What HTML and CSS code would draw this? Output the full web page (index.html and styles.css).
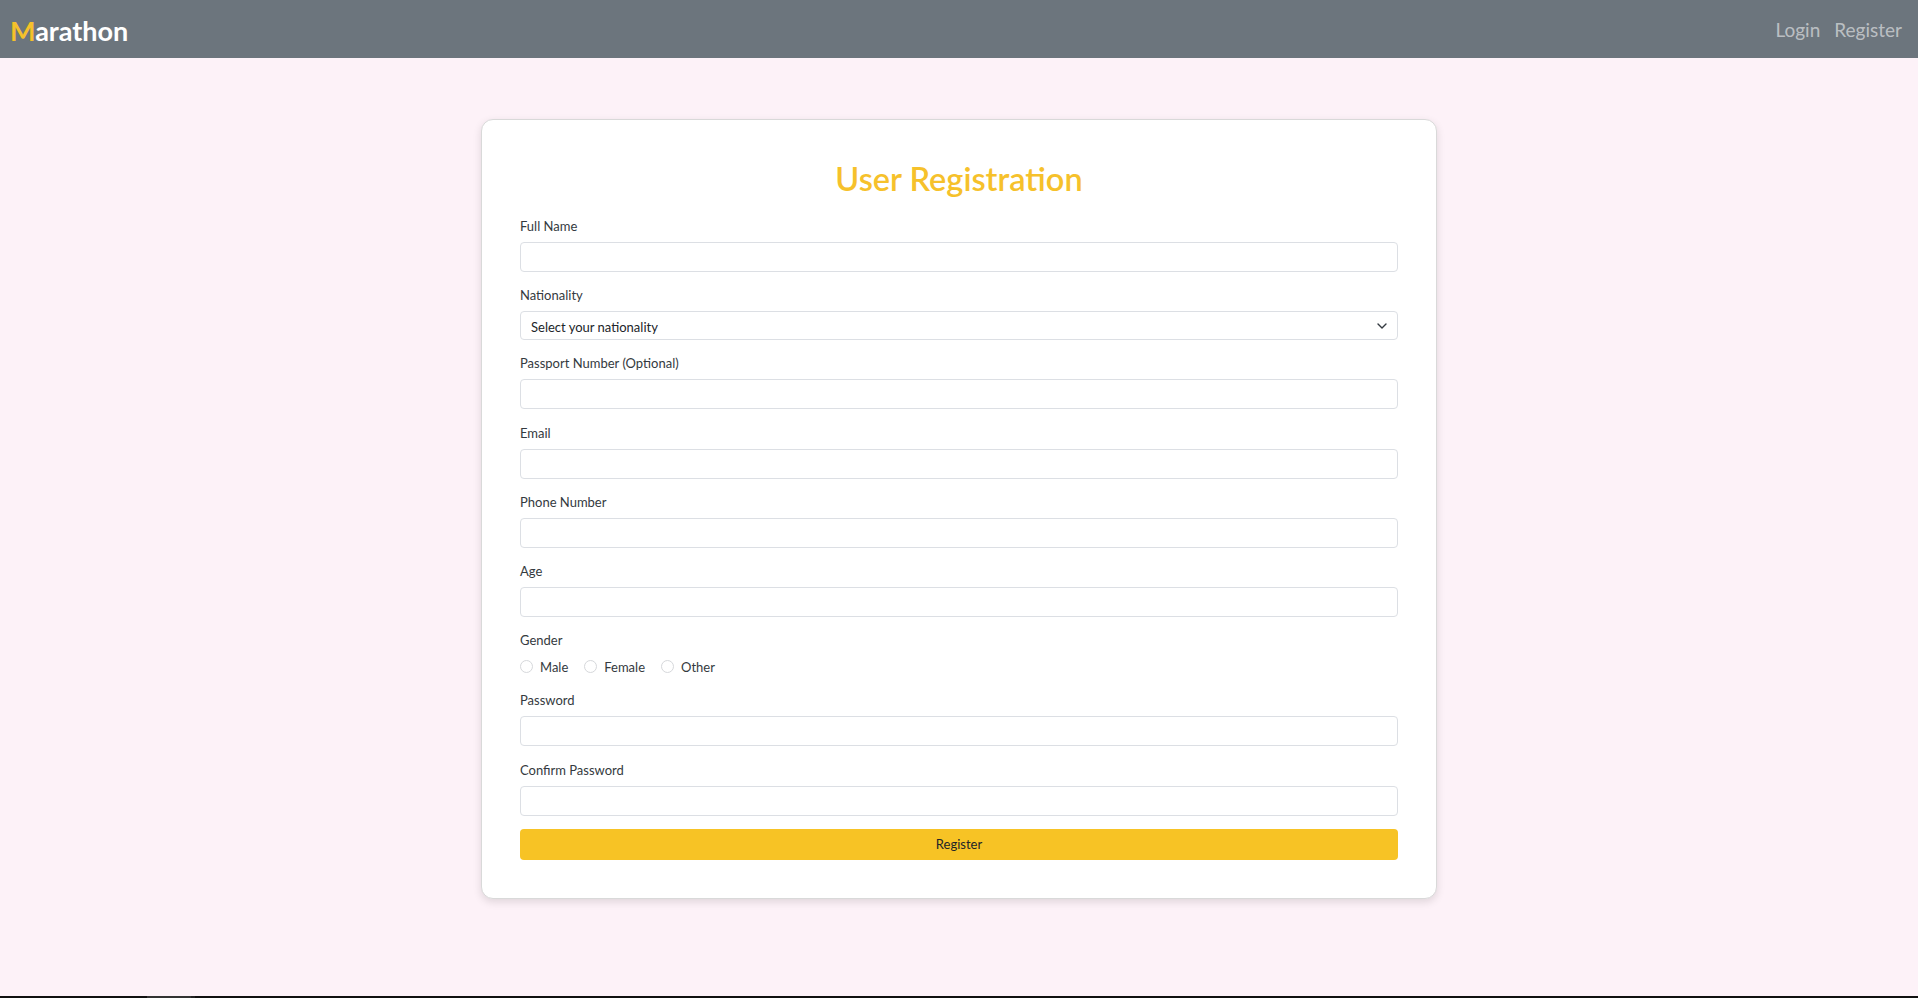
FILE: index.html
```html
<!DOCTYPE html>
<html lang="en">
<head>
<meta charset="utf-8">
<title>Marathon - User Registration</title>
<link rel="stylesheet" href="styles.css">
</head>
<body>
<header class="navbar">
  <a class="brand" href="#"><span class="brand-m">M</span>arathon</a>
  <nav class="nav-links">
    <a href="#">Login</a>
    <a href="#">Register</a>
  </nav>
</header>
<main class="page">
  <form class="card">
    <h1 class="title">User Registration</h1>
    <div class="field">
      <label class="label">Full Name</label>
      <input class="input" type="text">
    </div>
    <div class="field">
      <label class="label">Nationality</label>
      <div class="select-wrap">
        <select class="input select">
          <option>Select your nationality</option>
        </select>
        <svg class="chevron" width="10" height="6" viewBox="0 0 10 6"><path d="M1 1l4 4 4-4" fill="none" stroke="#343a40" stroke-width="1.4" stroke-linecap="round" stroke-linejoin="round"/></svg>
      </div>
    </div>
    <div class="field">
      <label class="label">Passport Number (Optional)</label>
      <input class="input" type="text">
    </div>
    <div class="field">
      <label class="label">Email</label>
      <input class="input" type="email">
    </div>
    <div class="field">
      <label class="label">Phone Number</label>
      <input class="input" type="tel">
    </div>
    <div class="field">
      <label class="label">Age</label>
      <input class="input" type="number">
    </div>
    <div class="field">
      <label class="label">Gender</label>
      <div class="radios">
        <label class="radio"><input type="radio" name="g"><span>Male</span></label>
        <label class="radio"><input type="radio" name="g"><span>Female</span></label>
        <label class="radio"><input type="radio" name="g"><span>Other</span></label>
      </div>
    </div>
    <div class="field">
      <label class="label">Password</label>
      <input class="input" type="password">
    </div>
    <div class="field">
      <label class="label">Confirm Password</label>
      <input class="input" type="password">
    </div>
    <button class="btn" type="button">Register</button>
  </form>
</main>
<div class="taskbar"></div>
</body>
</html>
```
FILE: styles.css
```css
* { box-sizing: border-box; }
html, body { margin: 0; padding: 0; }
body {
  font-family: Lato, "Open Sans", sans-serif;
  background: #fdf2f8;
  color: #212529;
  min-height: 100vh;
  display: flex;
  flex-direction: column;
}
.navbar {
  height: 58px;
  background: #6c757d;
  display: flex;
  align-items: center;
  justify-content: space-between;
  padding: 0 16px 0 10px;
  flex-shrink: 0;
}
.brand {
  font-size: 27px;
  font-weight: 700;
  color: #fff;
  text-decoration: none;
  line-height: 1;
  margin-top: 2px;
}
.brand-m { color: #f5c12b; }
.nav-links {
  display: flex;
  gap: 14px;
}
.nav-links a {
  color: rgba(255,255,255,0.55);
  text-decoration: none;
  font-size: 19px;
  line-height: 1;
}
.page {
  flex: 1;
  display: flex;
  justify-content: center;
  align-items: flex-start;
  padding-top: 61px;
}
.card {
  width: 956px;
  background: #fff;
  border: 1px solid #d9d9d9;
  border-radius: 12px;
  box-shadow: 0 3px 8px rgba(0,0,0,0.12);
  padding: 38px 38px 38px;
  display: flex;
  flex-direction: column;
}
.title {
  margin: 2px 0 18px;
  text-align: center;
  font-size: 32.5px;
  line-height: 38px;
  font-weight: 600;
  color: #f6c12b;
}
.field {
  display: flex;
  flex-direction: column;
  gap: 6px;
  margin-bottom: 13.2px;
}
.label {
  font-size: 13px;
  line-height: 20px;
  color: #343a40;
}
.input {
  height: 30px;
  width: 100%;
  border: 1px solid #dcdfe4;
  border-radius: 4px;
  background: #fff;
  font-family: inherit;
  font-size: 13px;
  padding: 0 10px;
  color: #212529;
  outline: none;
}
.select-wrap {
  position: relative;
}
.select {
  appearance: none;
  -webkit-appearance: none;
  height: 29px;
  padding-top: 2px;
}
.chevron {
  position: absolute;
  right: 11px;
  top: 12px;
  pointer-events: none;
}
.radios {
  display: flex;
  align-items: center;
  height: 21px;
  gap: 16px;
}
.radio {
  display: flex;
  align-items: center;
  gap: 7px;
  font-size: 13px;
  color: #343a40;
}
.radio input {
  appearance: none;
  -webkit-appearance: none;
  width: 13px;
  height: 13px;
  margin: 0;
  border: 1px solid #d6d8db;
  border-radius: 50%;
  background: #fff;
}
.btn {
  height: 31px;
  border: none;
  border-radius: 4px;
  background: #f7c325;
  color: #212529;
  font-family: inherit;
  font-size: 13px;
  cursor: pointer;
}
.taskbar {
  height: 2px;
  flex-shrink: 0;
  background: linear-gradient(to right, #111 0, #111 147px, #333 147px, #333 191px, #222 191px, #222 195px, #111 195px);
}
```
